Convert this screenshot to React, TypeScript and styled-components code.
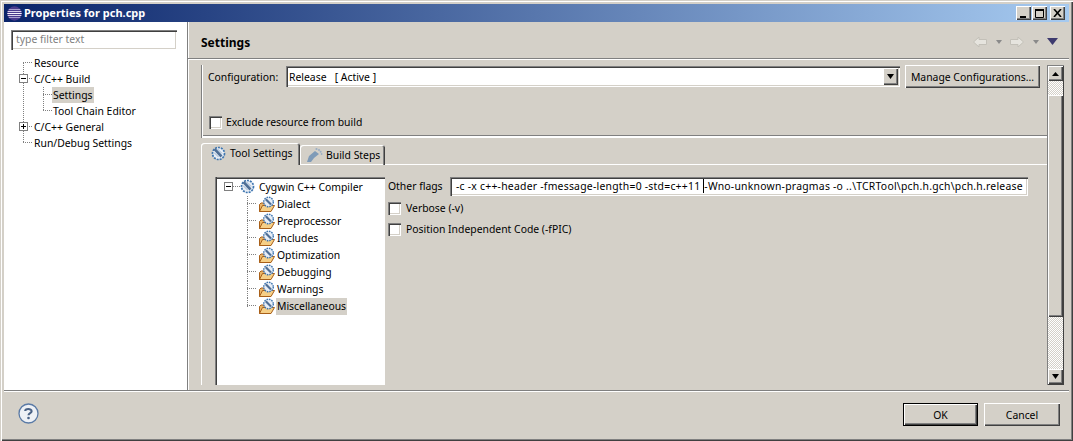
import React from "react";
import styled, { createGlobalStyle, css } from "styled-components";

const Global = createGlobalStyle`
  html, body { margin: 0; padding: 0; background: #d4d0c8; }
  * { box-sizing: border-box; }
  body { font-family: "Noto Sans", Tahoma, sans-serif; font-size: 10.4px; color: #000; }
`;

const raised = css`
  background: #d4d0c8;
  box-shadow: inset 1px 1px 0 #fff, inset -1px -1px 0 #404040, inset -2px -2px 0 #808080;
`;
const sunken = css`
  background: #fff;
  box-shadow: inset 1px 1px 0 #808080, inset 2px 2px 0 #404040, inset -1px -1px 0 #fff, inset -2px -2px 0 #d4d0c8;
`;
const checker = css`
  background: repeating-conic-gradient(#fff 0 25%, #d4d0c8 0 50%) 0 0 / 2px 2px;
`;

const Window = styled.div`
  width: 1073px; height: 441px; padding: 4px;
  display: flex; flex-direction: column;
  background: #d4d0c8;
  box-shadow: inset 1px 1px 0 #d4d0c8, inset 2px 2px 0 #fff, inset -1px -1px 0 #404040, inset -2px -2px 0 #808080;
`;
const TitleBar = styled.div`
  height: 18px; flex: none; display: flex; align-items: center; padding: 0 4px 0 3px;
  background: linear-gradient(90deg, #0a246a, #a6caf0);
`;
const TitleText = styled.span`
  font: bold 11px/18px "Noto Sans", sans-serif; color: #fff; margin-left: 2px; flex: 1;
`;
const CaptionGroup = styled.div`
  display: flex; align-items: center;
`;
const CaptionButton = styled.div<{ $gap?: number }>`
  ${raised};
  width: 15px; height: 14px; margin-left: ${p => p.$gap ?? 1}px;
  display: flex; align-items: center; justify-content: center;
`;
const Main = styled.div`
  flex: 1; display: flex; min-height: 0;
  height: 368px;
`;
const LeftPane = styled.div`
  width: 183px; flex: none; background: #fff; padding: 8px 0 0 7px;
`;
const Filter = styled.div`
  ${sunken};
  width: 166px; height: 20px; padding-left: 5px;
  line-height: 19px; color: #808080;
`;
const NavTree = styled.div`
  margin: 5px 0 0 -7px;
`;
const TreeRow = styled.div<{ $h: number }>`
  height: ${p => p.$h}px; display: flex; align-items: stretch; white-space: nowrap;
`;
const TreeLabel = styled.span<{ $sel?: boolean; $tall?: boolean }>`
  padding: 0 1px; line-height: ${p => (p.$tall ? 17 : 16)}px;
  background: ${p => (p.$sel ? "#d4d0c8" : "transparent")};
`;
const RightPane = styled.div`
  flex: 1; min-width: 0; display: flex; flex-direction: column;
  border-left: 1px solid #808080;
  box-shadow: inset 1px 0 0 #fff;
`;
const Header = styled.div`
  height: 36px; flex: none; display: flex; align-items: center; padding: 3px 11px 0 13px;
`;
const HeaderTitle = styled.div`
  font: bold 12px "Noto Sans", sans-serif; flex: 1; margin-top: 1px;
`;
const Rule = styled.div`
  height: 2px; flex: none; background: #fff; border-top: 1px solid #808080;
`;
const Content = styled.div`
  flex: 1; min-height: 0; display: flex; padding: 5px 5px 5px 13px;
`;
const Scrolled = styled.div`
  flex: 1; min-width: 0; display: flex; flex-direction: column;
`;
const ConfigGroup = styled.div`
  height: 73px; flex: none; padding: 0 7px 0 7px;
  box-shadow: inset 1px 0 0 #808080, inset 2px 0 0 #fff, inset 0 -2px 0 #fff, inset 0 -3px 0 #808080;
`;
const ConfigRow = styled.div`
  display: flex; align-items: flex-start; height: 23px;
`;
const ConfigLabel = styled.span`
  width: 78px; line-height: 24px;
`;
const Combo = styled.div`
  ${sunken};
  width: 614px; height: 21px; margin: 1px 5px 0 0; padding: 0 2px 0 3px;
  display: flex; align-items: center; justify-content: space-between;
`;
const ComboValue = styled.span`
  white-space: pre;
`;
const ComboArrow = styled.div`
  ${raised};
  width: 15px; height: 17px; display: flex; align-items: center; justify-content: center;
`;
const Button = styled.div<{ $w: number; $default?: boolean }>`
  ${raised};
  width: ${p => p.$w}px; height: 23px; display: flex; align-items: center; justify-content: center;
  flex: none;
  ${p => p.$default && css`
    box-shadow: inset 0 0 0 1px #000, inset 2px 2px 0 #fff, inset -2px -2px 0 #404040, inset -3px -3px 0 #808080;
  `}
`;
const CheckRow = styled.label<{ $top: number; $left?: number }>`
  display: flex; align-items: center; height: 14px; gap: 4px;
  margin-top: ${p => p.$top}px; margin-left: ${p => p.$left ?? 0}px;
`;
const CheckBox = styled.span`
  ${sunken};
  width: 13px; height: 13px; flex: none; display: block;
`;
const CheckText = styled.span`
  margin-left: 1px;
`;
const Tabs = styled.div`
  margin-top: 5px; flex: 1; min-height: 0; display: flex; flex-direction: column;
`;
const TabStrip = styled.div`
  height: 22px; flex: none; display: flex; align-items: flex-end;
`;
const Tab = styled.div<{ $w: number; $active?: boolean }>`
  width: ${p => p.$w}px; height: ${p => (p.$active ? 22 : 20)}px; flex: none;
  display: flex; align-items: center; gap: ${p => (p.$active ? 4 : 3)}px;
  padding: ${p => (p.$active ? "0 0 2px 10px" : "0 0 1px 6px")};
  background: #d4d0c8;
  border-radius: 3px 3px 0 0;
  box-shadow: inset 1px 1px 0 #fff, inset -1px 0 0 #404040, inset -2px 0 0 #808080
    ${p => (p.$active ? "" : ", inset 0 -1px 0 #fff")};
`;
const TabFill = styled.div`
  flex: 1; height: 1px; background: #fff;
`;
const FolderBody = styled.div`
  flex: 1; min-height: 0; display: flex; padding: 12px 0 0 14px;
  box-shadow: inset 1px 0 0 #fff;
`;
const ToolTree = styled.div`
  width: 170px; flex: none; padding: 2px 0 0 8px;
  background: #fff;
  box-shadow: inset 1px 0 0 #808080, inset 2px 0 0 #404040, inset 0 1px 0 #808080, inset 0 2px 0 #404040, inset -1px 0 0 #fff;
`;
const IconGap = styled.span`
  width: 3px; flex: none;
`;
const ToolForm = styled.div`
  flex: 1; min-width: 0; padding-left: 3px;
`;
const FlagsRow = styled.div`
  display: flex; align-items: flex-start; height: 18px; margin-right: 19px;
`;
const FlagsLabel = styled.span`
  width: 62px; line-height: 18px;
`;
const FlagsInput = styled.div`
  ${sunken};
  flex: 1; height: 19px; padding-left: 6px; line-height: 18px; white-space: nowrap; overflow: hidden;
  letter-spacing: .24px;
`;
const Caret = styled.span`
  border-left: 1px solid #000;
`;
const ScrollBar = styled.div`
  width: 17px; flex: none; display: flex; flex-direction: column; padding: 1px;
  height: 320px;
  background: #d4d0c8;
  box-shadow: inset 1px 1px 0 #808080, inset -1px -1px 0 #404040;
`;
const ScrollButton = styled.div`
  ${raised};
  height: 15px; flex: none; display: flex; align-items: center; justify-content: center;
`;
const Track = styled.div<{ $h?: number }>`
  ${checker};
  height: ${p => p.$h}px; flex: ${p => (p.$h ? "none" : "1")};
`;
const Thumb = styled.div`
  ${raised};
  height: 222px; flex: none;
`;
const Footer = styled.div`
  height: 47px; flex: none; display: flex; align-items: flex-start; padding: 12px 9px 0 14px;
  border-top: 1px solid #808080;
  box-shadow: inset 0 1px 0 #fff;
`;
const HelpSlot = styled.div`
  flex: 1; height: 22px; display: flex; align-items: flex-start;
`;
const FooterButtons = styled.div`
  display: flex; gap: 6px;
`;
const NavBar = styled.div`
  display: flex; align-items: center;
`;
const NavSlot = styled.span<{ $m: number }>`
  margin-left: ${p => p.$m}px; display: block;
`;

const Guide = ({ w, h, v = [], hl, box }: {
  w: number; h: number; v?: [number, number, number][]; hl?: [number, number]; box?: { x: number; open: boolean };
}) => {
  const c = Math.floor(h / 2);
  return (
    <svg width={w} height={h} style={{ flex: "none", display: "block" }} shapeRendering="crispEdges">
      {v.map(([x, a, b], i) => (
        <line key={i} x1={x + 0.5} x2={x + 0.5} y1={a} y2={b} stroke="#808080" strokeDasharray="1 1" />
      ))}
      {hl && <line x1={hl[0]} x2={hl[1]} y1={c - 0.5} y2={c - 0.5} stroke="#808080" strokeDasharray="1 1" />}
      {box && (
        <g>
          <rect x={box.x + 0.5} y={c - 4.5} width={8} height={8} fill="#fff" stroke="#808080" />
          <line x1={box.x + 2} x2={box.x + 7} y1={c - 0.5} y2={c - 0.5} stroke="#000" />
          {!box.open && <line x1={box.x + 4.5} x2={box.x + 4.5} y1={c - 3} y2={c + 2} stroke="#000" />}
        </g>
      )}
    </svg>
  );
};

const EclipseIcon = () => (
  <svg width="15" height="15" viewBox="0 0 15 15" style={{ flex: "none", display: "block" }}>
    <defs>
      <clipPath id="eclClip"><circle cx="7.5" cy="7.5" r="7.2" /></clipPath>
    </defs>
    <circle cx="7.5" cy="7.5" r="7.2" fill="#4a3b8c" />
    <g clipPath="url(#eclClip)">
      <path d="M0 3.5h15" stroke="#a99fce" strokeWidth="1" />
      <path d="M0 5.5h15" stroke="#d9d2ea" strokeWidth="1" />
      <path d="M0 7.5h15" stroke="#f7f4fb" strokeWidth="1" />
      <path d="M0 9.5h15" stroke="#d9d2ea" strokeWidth="1" />
      <path d="M0 11.5h15" stroke="#a99fce" strokeWidth="1" />
    </g>
  </svg>
);

const ToolIcon = () => (
  <svg width="15" height="15" viewBox="0 0 15 15" style={{ flex: "none", display: "block" }}>
    <circle cx="7.5" cy="7.5" r="6" fill="#e8eef6" stroke="#3f76b0" strokeWidth="1.7" strokeDasharray="2 1" />
    <path d="M3.5 3 L10.5 10.5" stroke="#4f6f96" strokeWidth="2.6" />
    <path d="M6.5 3 L11 7.5 M3 6.5 L7.5 11" stroke="#9db5cf" strokeWidth="1" />
  </svg>
);

const FolderIcon = () => (
  <svg width="18" height="17" viewBox="0 0 18 17" style={{ flex: "none", display: "block" }}>
    <path d="M1.5 15.5 V8.5 L3 7 H6.5 V15.5 Z" fill="#eab567" stroke="#a85f18" />
    <path d="M1.5 15.5 L4.5 9.5 H16.5 L13 15.5 Z" fill="#f6cf86" stroke="#a85f18" />
    <circle cx="10.5" cy="6" r="4.8" fill="#e8eef6" stroke="#3f76b0" strokeWidth="1.4" strokeDasharray="1.6 .9" />
    <path d="M7.8 3.2 L13 8.6" stroke="#4f6f96" strokeWidth="2.1" />
  </svg>
);

const StepsIcon = () => (
  <svg width="17" height="17" viewBox="0 0 17 17" style={{ flex: "none", display: "block" }}>
    <path d="M1 16 L3 10 L9 5 L13 8 L8 12 L5 16 Z" fill="#7f9bb8" />
    <circle cx="10.5" cy="3" r="1.1" fill="#9aaec4" /><circle cx="13" cy="4" r="1" fill="#9aaec4" />
    <circle cx="14.6" cy="5.8" r="1" fill="#9aaec4" /><circle cx="15.6" cy="8" r=".9" fill="#9aaec4" />
  </svg>
);

const NavArrow = ({ flip }: { flip?: boolean }) => (
  <svg width="14" height="12" viewBox="0 0 14 12" style={{ display: "block", transform: flip ? "scaleX(-1)" : undefined }}>
    <path d="M.5 6 L6 1 V3.5 H13.5 V8.5 H6 V11 Z" fill="#e6e4de" stroke="#c3c0b8" />
  </svg>
);
const Tri = ({ w, color }: { w: number; color: string }) => (
  <svg width={w} height={Math.ceil(w / 2) + 1} style={{ display: "block" }} viewBox={`0 0 ${w} ${Math.ceil(w / 2) + 1}`}>
    <path d={`M0 0H${w}L${w / 2} ${Math.ceil(w / 2) + 1}Z`} fill={color} />
  </svg>
);

const HelpIcon = () => (
  <svg width="21" height="21" viewBox="0 0 21 21" style={{ display: "block" }}>
    <circle cx="10.5" cy="10.5" r="9.5" fill="#eef1f6" stroke="#5a7aa6" strokeWidth="1.3" />
    <path d="M7.2 8 C7.2 5.5 13.6 5.2 13.6 8.2 C13.6 10.2 10.5 10 10.5 12.2" fill="none" stroke="#4a6286" strokeWidth="2.1" />
    <circle cx="10.5" cy="15" r="1.3" fill="#4a6286" />
  </svg>
);

const tools = ["Dialect", "Preprocessor", "Includes", "Optimization", "Debugging", "Warnings", "Miscellaneous"];

export default function App() {
  return (
    <>
      <Global />
      <Window>
        <TitleBar>
          <EclipseIcon />
          <TitleText>Properties for pch.cpp</TitleText>
          <CaptionGroup>
            <CaptionButton>
              <svg width="9" height="9" style={{ display: "block" }}><rect x="1" y="7" width="6" height="2" fill="#000" /></svg>
            </CaptionButton>
            <CaptionButton>
              <svg width="10" height="9" style={{ display: "block" }}><path d="M.5 1.5h8v7h-8z" fill="none" stroke="#000" /><path d="M0 1h9" stroke="#000" strokeWidth="2" /></svg>
            </CaptionButton>
            <CaptionButton $gap={3}>
              <svg width="9" height="8" style={{ display: "block" }}><path d="M1 0l7 8M8 0L1 8" stroke="#000" strokeWidth="1.6" /></svg>
            </CaptionButton>
          </CaptionGroup>
        </TitleBar>
        <Main>
          <LeftPane>
            <Filter>type filter text</Filter>
            <NavTree>
              <TreeRow $h={16}><Guide w={29} h={16} v={[[19, 8, 16]]} hl={[19, 29]} /><TreeLabel>Resource</TreeLabel></TreeRow>
              <TreeRow $h={16}><Guide w={29} h={16} v={[[19, 0, 16]]} hl={[23, 29]} box={{ x: 15, open: true }} /><TreeLabel>C/C++ Build</TreeLabel></TreeRow>
              <TreeRow $h={16}><Guide w={48} h={16} v={[[19, 0, 16], [39, 0, 16]]} hl={[39, 48]} /><TreeLabel $sel>Settings</TreeLabel></TreeRow>
              <TreeRow $h={16}><Guide w={48} h={16} v={[[19, 0, 16], [39, 0, 8]]} hl={[39, 48]} /><TreeLabel>Tool Chain Editor</TreeLabel></TreeRow>
              <TreeRow $h={16}><Guide w={29} h={16} v={[[19, 0, 16]]} hl={[23, 29]} box={{ x: 15, open: false }} /><TreeLabel>C/C++ General</TreeLabel></TreeRow>
              <TreeRow $h={16}><Guide w={29} h={16} v={[[19, 0, 8]]} hl={[19, 29]} /><TreeLabel>Run/Debug Settings</TreeLabel></TreeRow>
            </NavTree>
          </LeftPane>
          <RightPane>
            <Header>
              <HeaderTitle>Settings</HeaderTitle>
              <NavBar>
                <NavArrow />
                <NavSlot $m={9}><Tri w={6} color="#8a8a8a" /></NavSlot>
                <NavSlot $m={8}><NavArrow flip /></NavSlot>
                <NavSlot $m={9}><Tri w={6} color="#8a8a8a" /></NavSlot>
                <NavSlot $m={8}><Tri w={11} color="#3d3a6e" /></NavSlot>
              </NavBar>
            </Header>
            <Rule />
            <Content>
              <Scrolled>
                <ConfigGroup>
                  <ConfigRow>
                    <ConfigLabel>Configuration:</ConfigLabel>
                    <Combo>
                      <ComboValue>{"Release   [ Active ]"}</ComboValue>
                      <ComboArrow><Tri w={7} color="#000" /></ComboArrow>
                    </Combo>
                    <Button $w={135}>Manage Configurations...</Button>
                  </ConfigRow>
                  <CheckRow $top={27} $left={1}><CheckBox />Exclude resource from build</CheckRow>
                </ConfigGroup>
                <Tabs>
                  <TabStrip>
                    <Tab $w={99} $active><ToolIcon />Tool Settings</Tab>
                    <Tab $w={85}><StepsIcon />Build Steps</Tab>
                    <TabFill />
                  </TabStrip>
                  <FolderBody>
                    <ToolTree>
                      <TreeRow $h={17}>
                        <Guide w={17} h={17} hl={[10, 17]} box={{ x: 1, open: true }} />
                        <ToolIcon />
                        <IconGap />
                        <TreeLabel $tall>Cygwin C++ Compiler</TreeLabel>
                      </TreeRow>
                      {tools.map((t, i) => (
                        <TreeRow $h={17} key={t}>
                          <Guide w={35} h={17} v={[[24, 0, i === tools.length - 1 ? 9 : 17]]} hl={[24, 34]} />
                          <FolderIcon />
                          <TreeLabel $tall $sel={i === tools.length - 1}>{t}</TreeLabel>
                        </TreeRow>
                      ))}
                    </ToolTree>
                    <ToolForm>
                      <FlagsRow>
                        <FlagsLabel>Other flags</FlagsLabel>
                        <FlagsInput>-c -x c++-header -fmessage-length=0 -std=c++11 <Caret />-Wno-unknown-pragmas -o ..\TCRTool\pch.h.gch\pch.h.release</FlagsInput>
                      </FlagsRow>
                      <CheckRow $top={6}><CheckBox /><CheckText>Verbose (-v)</CheckText></CheckRow>
                      <CheckRow $top={7}><CheckBox /><CheckText>Position Independent Code (-fPIC)</CheckText></CheckRow>
                    </ToolForm>
                  </FolderBody>
                </Tabs>
              </Scrolled>
              <ScrollBar>
                <ScrollButton>
                  <svg width="7" height="4" style={{ display: "block" }}><path d="M0 4H7L3.5 0Z" fill="#000" /></svg>
                </ScrollButton>
                <Track $h={14} />
                <Thumb />
                <Track />
                <ScrollButton><Tri w={7} color="#000" /></ScrollButton>
              </ScrollBar>
            </Content>
          </RightPane>
        </Main>
        <Footer>
          <HelpSlot><HelpIcon /></HelpSlot>
          <FooterButtons>
            <Button $w={75} $default>OK</Button>
            <Button $w={76}>Cancel</Button>
          </FooterButtons>
        </Footer>
      </Window>
    </>
  );
}
